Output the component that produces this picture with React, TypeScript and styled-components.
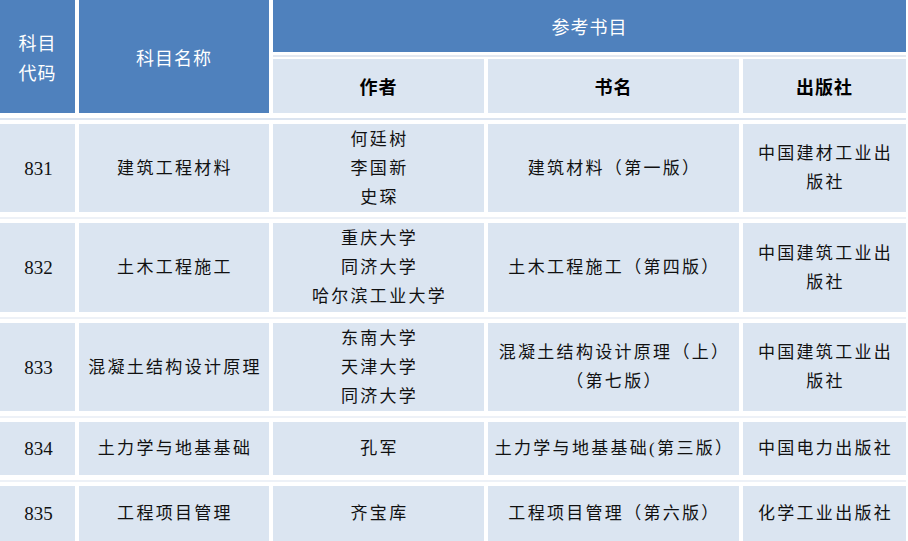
import React from "react";
import styled, { createGlobalStyle } from "styled-components";

const Global = createGlobalStyle`
  html, body { margin: 0; padding: 0; background: #ffffff; overflow: hidden; }
  #root { width: 908px; height: 541px; }
`;

const Grid = styled.div`
  display: grid;
  grid-template-columns: 75px 190px 211px 251px 163px;
  grid-template-rows: 52px 7px 54px 11px 88px 11px 89px 11px 88px 11px 53px 11px 55px;
  column-gap: 4px;
  width: 906px;
`;

const HeadCell = styled.div<{ $col: string; $row: string }>`
  grid-column: ${(p) => p.$col};
  grid-row: ${(p) => p.$row};
  background: #4f81bd;
  color: #ffffff;
  display: flex;
  flex-direction: column;
  align-items: center;
  justify-content: center;
  font-family: "Noto Sans CJK SC", "Noto Sans", sans-serif;
  font-size: 18px;
  letter-spacing: 1px;
  line-height: 30px;
`;

const SubHead = styled.div<{ $col: number }>`
  grid-column: ${(p) => p.$col};
  grid-row: 3;
  background: #dbe5f1;
  color: #000000;
  display: flex;
  align-items: center;
  justify-content: center;
  font-family: "Noto Sans CJK SC", "Noto Sans", sans-serif;
  font-weight: 700;
  font-size: 18px;
  letter-spacing: 1px;
`;

const Divider = styled.div<{ $col: string; $row: number; $tone: string }>`
  grid-column: ${(p) => p.$col};
  grid-row: ${(p) => p.$row};
  display: flex;
  align-items: center;
  &::after {
    content: "";
    display: block;
    width: 100%;
    height: 2px;
    background: ${(p) => p.$tone};
  }
`;

const Cell = styled.div<{ $col: number; $row: number }>`
  grid-column: ${(p) => p.$col};
  grid-row: ${(p) => p.$row};
  background: #dbe5f1;
  color: #111111;
  display: flex;
  flex-direction: column;
  align-items: center;
  justify-content: center;
  text-align: center;
  font-family: "Liberation Serif", "Noto Sans CJK SC", serif;
  font-size: 17px;
  letter-spacing: 2.3px;
  line-height: 29px;
  white-space: nowrap;
  padding-left: 2px;
`;

const Code = styled.span`
  font-family: "Liberation Serif", serif;
  font-size: 19px;
  letter-spacing: 0;
`;

type Row = {
  code: string;
  name: string;
  authors: string[];
  book: string[];
  pub: string[];
};

const rows: Row[] = [
  {
    code: "831",
    name: "建筑工程材料",
    authors: ["何廷树", "李国新", "史琛"],
    book: ["建筑材料（第一版）"],
    pub: ["中国建材工业出", "版社"],
  },
  {
    code: "832",
    name: "土木工程施工",
    authors: ["重庆大学", "同济大学", "哈尔滨工业大学"],
    book: ["土木工程施工（第四版）"],
    pub: ["中国建筑工业出", "版社"],
  },
  {
    code: "833",
    name: "混凝土结构设计原理",
    authors: ["东南大学", "天津大学", "同济大学"],
    book: ["混凝土结构设计原理（上）", "（第七版）"],
    pub: ["中国建筑工业出", "版社"],
  },
  {
    code: "834",
    name: "土力学与地基基础",
    authors: ["孔军"],
    book: ["土力学与地基基础(第三版）"],
    pub: ["中国电力出版社"],
  },
  {
    code: "835",
    name: "工程项目管理",
    authors: ["齐宝库"],
    book: ["工程项目管理（第六版）"],
    pub: ["化学工业出版社"],
  },
];

const Lines = ({ items }: { items: string[] }) => (
  <>
    {items.map((t, i) => (
      <span key={i}>{t}</span>
    ))}
  </>
);

export default function App() {
  return (
    <>
      <Global />
      <Grid>
        <HeadCell $col="1" $row="1 / 4">
          <span>科目</span>
          <span>代码</span>
        </HeadCell>
        <HeadCell $col="2" $row="1 / 4">
          <span>科目名称</span>
        </HeadCell>
        <HeadCell $col="3 / 6" $row="1">
          <span>参考书目</span>
        </HeadCell>
        <Divider $col="3 / 6" $row={2} $tone="#e3e8f0" />
        <SubHead $col={3}>作者</SubHead>
        <SubHead $col={4}>书名</SubHead>
        <SubHead $col={5}>出版社</SubHead>
        {rows.map((r, i) => {
          const row = 5 + i * 2;
          return (
            <React.Fragment key={r.code}>
              <Divider $col="1 / -1" $row={row - 1} $tone={i === 0 ? "#dbe4f0" : "#edf1f7"} />
              <Cell $col={1} $row={row}>
                <Code>{r.code}</Code>
              </Cell>
              <Cell $col={2} $row={row}>
                <span>{r.name}</span>
              </Cell>
              <Cell $col={3} $row={row}>
                <Lines items={r.authors} />
              </Cell>
              <Cell $col={4} $row={row}>
                <Lines items={r.book} />
              </Cell>
              <Cell $col={5} $row={row}>
                <Lines items={r.pub} />
              </Cell>
            </React.Fragment>
          );
        })}
      </Grid>
    </>
  );
}
